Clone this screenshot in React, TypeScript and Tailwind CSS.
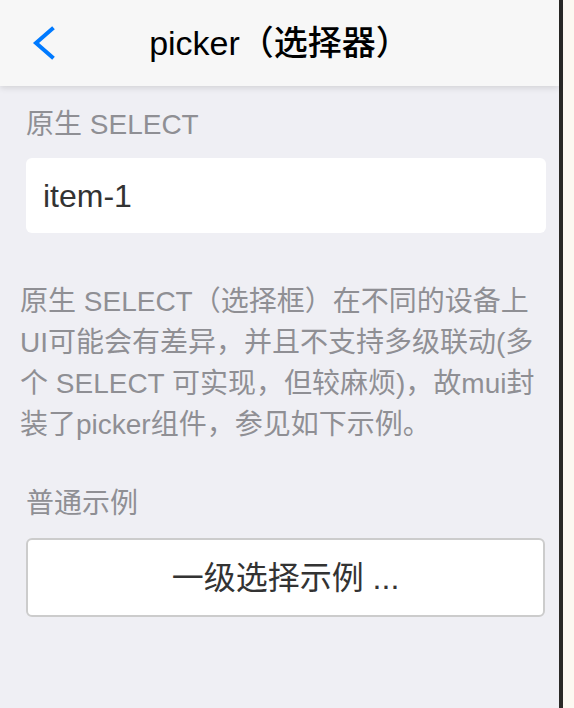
export default function App() {
  return (
    <div className="flex h-[708px] w-full font-['Liberation_Sans','Noto_Sans_CJK_SC',sans-serif]">
      <div className="flex w-[559px] flex-col bg-[#efeff4]">
        <header className="relative z-10 grid h-[86px] grid-cols-[1fr_auto_1fr] items-center bg-[#f7f7f7] shadow-[0_2px_6px_rgba(0,0,0,0.12)]">
          <button className="flex items-center pl-[31px]" aria-label="back">
            <svg width="26" height="38" viewBox="0 0 26 38" fill="none">
              <polyline points="21,5 5,19 21,33" stroke="#007aff" strokeWidth="4" strokeLinecap="square" />
            </svg>
          </button>
          <h1 className="text-[34px] font-medium text-black">picker（选择器）</h1>
          <div />
        </header>

        <main className="flex flex-col">
          <h5 className="mt-[18px] px-[26px] text-[28px] leading-[42px] text-[#8f8f94]">原生 SELECT</h5>
          <div className="mx-[26px] mt-[12px]">
            <select className="h-[75px] w-[520px] appearance-none rounded-[6px] bg-white px-[17px] text-[32px] text-[#333] outline-none">
              <option>item-1</option>
              <option>item-2</option>
              <option>item-3</option>
            </select>
          </div>

          <p className="mt-[48px] px-[20px] text-[28px] leading-[41px] text-[#8f8f94]">
            原生 SELECT（选择框）在不同的设备上UI可能会有差异，并且不支持多级联动(多个 SELECT 可实现，但较麻烦)，故mui封装了picker组件，参见如下示例。
          </p>

          <h5 className="mt-[38px] px-[26px] text-[28px] leading-[42px] text-[#8f8f94]">普通示例</h5>
          <div className="mx-[26px] mt-[13px]">
            <button className="h-[79px] w-[519px] rounded-[6px] border-2 border-[#cccccc] bg-white text-[32px] text-[#333]">
              一级选择示例 ...
            </button>
          </div>
        </main>
      </div>
      <div className="w-[4px] bg-[#2a2926]" />
      <div className="flex-1 bg-[#fcf8f1]" />
    </div>
  );
}
